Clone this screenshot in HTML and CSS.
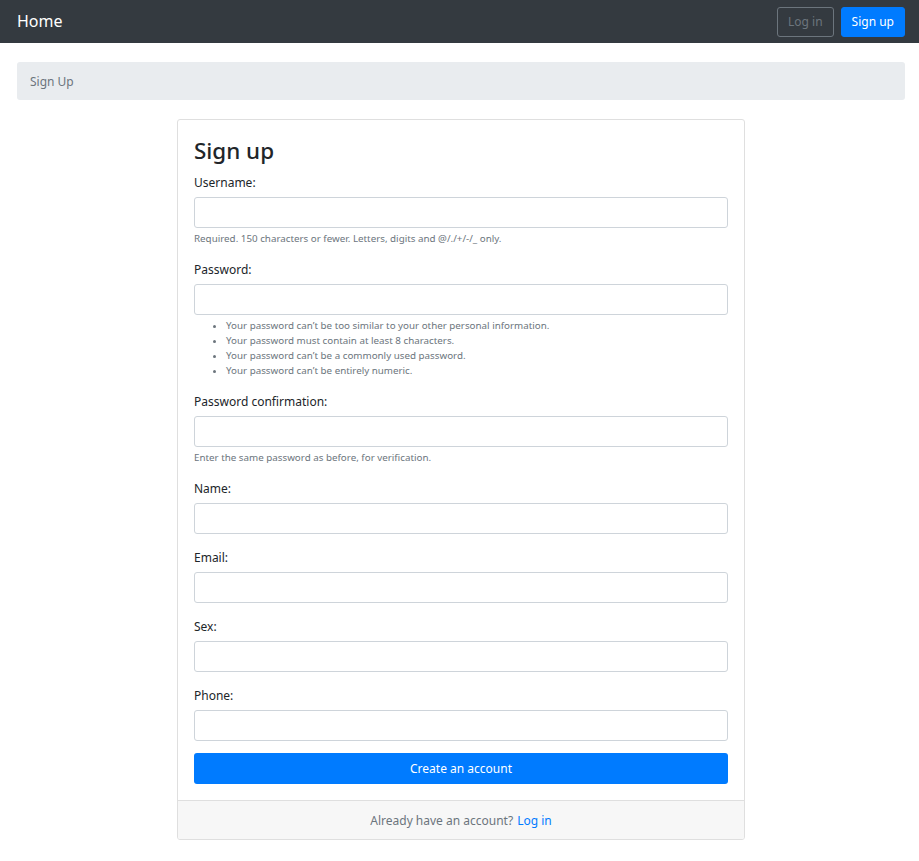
FILE: index.html
```html
<!DOCTYPE html>
<html lang="en">
<head>
<meta charset="utf-8">
<title>Sign Up</title>
<link rel="stylesheet" href="styles.css">
</head>
<body>
<nav class="navbar">
  <a class="brand" href="#">Home</a>
  <div class="nav-actions">
    <a class="btn btn-outline" href="#">Log in</a>
    <a class="btn btn-primary" href="#">Sign up</a>
  </div>
</nav>
<main class="page">
  <div class="breadcrumb">Sign Up</div>
  <div class="card">
    <div class="card-body">
      <h2 class="title">Sign up</h2>
      <form class="form">
        <div class="group">
          <label class="label">Username:</label>
          <input class="input" type="text">
          <small class="help">Required. 150 characters or fewer. Letters, digits and @/./+/-/_ only.</small>
        </div>
        <div class="group">
          <label class="label">Password:</label>
          <input class="input" type="password">
          <ul class="help-list">
            <li>Your password can’t be too similar to your other personal information.</li>
            <li>Your password must contain at least 8 characters.</li>
            <li>Your password can’t be a commonly used password.</li>
            <li>Your password can’t be entirely numeric.</li>
          </ul>
        </div>
        <div class="group">
          <label class="label">Password confirmation:</label>
          <input class="input" type="password">
          <small class="help">Enter the same password as before, for verification.</small>
        </div>
        <div class="group">
          <label class="label">Name:</label>
          <input class="input" type="text">
        </div>
        <div class="group">
          <label class="label">Email:</label>
          <input class="input" type="email">
        </div>
        <div class="group">
          <label class="label">Sex:</label>
          <input class="input" type="text">
        </div>
        <div class="group group-last">
          <label class="label">Phone:</label>
          <input class="input" type="text">
        </div>
        <button class="submit" type="button">Create an account</button>
      </form>
    </div>
    <div class="card-footer">Already have an account? <a class="link" href="#">Log in</a></div>
  </div>
</main>
</body>
</html>
```
FILE: styles.css
```css
* { box-sizing: border-box; }
html, body { margin: 0; padding: 0; }
body {
  font-family: "Noto Sans", "Open Sans", sans-serif;
  font-size: 12px;
  line-height: 19.2px;
  color: #212529;
  background: #fff;
}
a { text-decoration: none; }

.navbar {
  height: 43px;
  background: #343a40;
  display: flex;
  align-items: center;
  justify-content: space-between;
  padding: 0 14px 0 17px;
}
.brand {
  color: #fff;
  font-size: 16px;
  line-height: 24px;
  margin-top: -2px;
}
.nav-actions { display: flex; gap: 7px; }
.btn {
  display: inline-flex;
  align-items: center;
  justify-content: center;
  height: 30px;
  padding: 0 10px;
  border-radius: 3px;
  font-size: 12px;
  border: 1px solid transparent;
}
.btn-outline { color: #6c757d; border-color: #6c757d; }
.btn-primary { color: #fff; background: #007bff; border-color: #007bff; }

.page { padding: 19px 14px 21px 17px; }
.breadcrumb {
  background: #e9ecef;
  border-radius: 3px;
  height: 38px;
  padding: 2px 13px 0;
  display: flex;
  align-items: center;
  color: #6c757d;
  font-size: 12px;
}
.card {
  width: 568px;
  margin: 19px auto 0;
  border: 1px solid #dfdfdf;
  border-radius: 3px;
  overflow: hidden;
}
.card-body { padding: 16px; }
.title {
  margin: 0 0 5.4px;
  font-size: 22.4px;
  line-height: 30.7px;
  font-weight: 500;
}
.form { display: flex; flex-direction: column; }
.group { display: flex; flex-direction: column; margin-bottom: 12.8px; }
.group-last { margin-bottom: 12px; }
.label { padding-top: 1px; margin-bottom: 5px; }
.input {
  height: 31px;
  border: 1px solid #ced4da;
  border-radius: 3px;
  padding: 0 10px;
  font: inherit;
  background: #fff;
}
.help {
  margin-top: 3px;
  font-size: 9.8px;
  line-height: 15px;
  color: #6c757d;
}
.help-list {
  margin: 3px 0 0;
  padding-left: 32px;
  font-size: 9.8px;
  line-height: 15px;
  color: #6c757d;
}
.help-list li::marker { color: #6c757d; }
.submit {
  height: 31px;
  width: 100%;
  border: none;
  border-radius: 3px;
  background: #007bff;
  color: #fff;
  font: inherit;
}
.card-footer {
  background: #f7f7f7;
  border-top: 1px solid #dfdfdf;
  height: 39px;
  display: flex;
  align-items: center;
  justify-content: center;
  color: #6c757d;
}
.link { color: #007bff; margin-left: 4px; }
```
